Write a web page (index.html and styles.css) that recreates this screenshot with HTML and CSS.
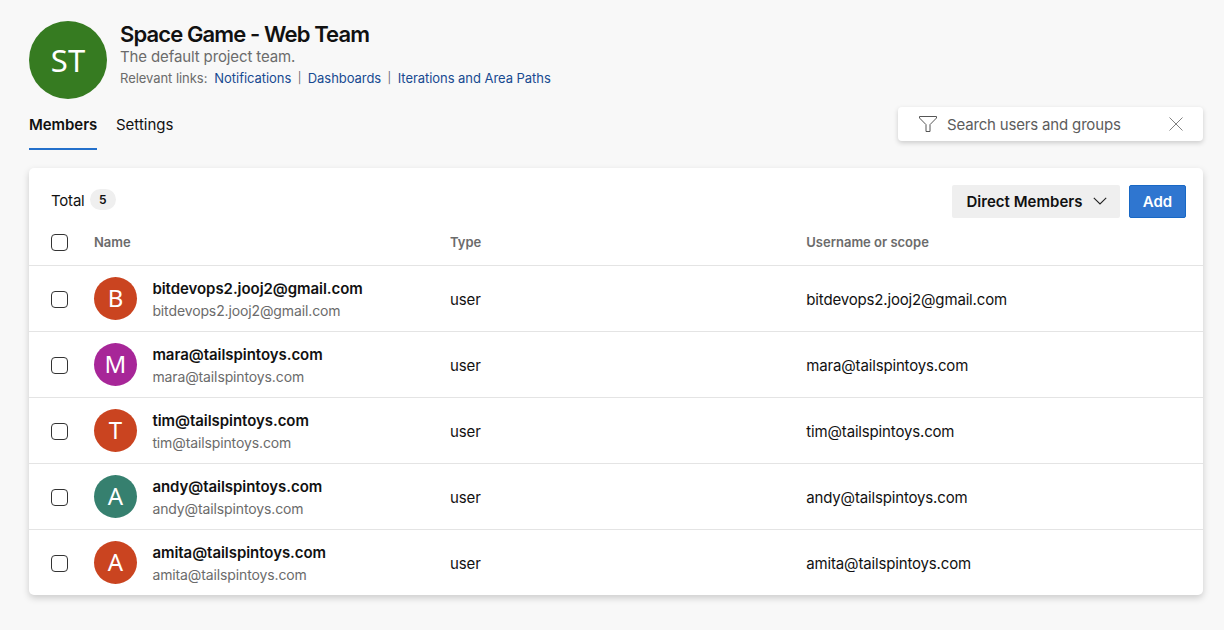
FILE: index.html
```html
<!DOCTYPE html>
<html lang="en">
<head>
<meta charset="utf-8">
<title>Space Game - Web Team</title>
<link rel="stylesheet" href="styles.css">
</head>
<body>
<header class="team-header">
  <div class="team-avatar">ST</div>
  <div class="team-info">
    <h1 class="team-name">Space Game - Web Team</h1>
    <div class="team-desc">The default project team.</div>
    <div class="team-links"><span class="links-label">Relevant links:</span><a>Notifications</a><span class="sep">|</span><a>Dashboards</a><span class="sep">|</span><a>Iterations and Area Paths</a></div>
  </div>
</header>
<div class="toolbar">
  <nav class="tabs">
    <div class="tab active"><span>Members</span></div>
    <div class="tab"><span>Settings</span></div>
  </nav>
  <div class="search">
    <svg class="filter-icon" width="18" height="16" viewBox="0 0 18 16" fill="none" stroke="#555" stroke-width="1"><path d="M.5.5h17v1.500l-6.500 6.600v6.900H7V8.600L.5 2z"/></svg>
    <span class="placeholder">Search users and groups</span>
    <svg class="clear-icon" width="14" height="14" viewBox="0 0 14 14" fill="none" stroke="#808080" stroke-width="1"><path d="M.5.5l13 13M13.500.5l-13 13"/></svg>
  </div>
</div>
<main class="card">
  <div class="card-head">
    <div class="total"><span class="total-label">Total</span><span class="count">5</span></div>
    <div class="actions">
      <button class="dropdown"><span>Direct Members</span><svg width="14" height="8" viewBox="0 0 14 8" fill="none" stroke="#222" stroke-width="1.1"><path d="M.8.8L7 7 13.200.8"/></svg></button>
      <button class="add"><span>Add</span></button>
    </div>
  </div>
  <div class="row columns"><i class="check"></i><span class="col-label">Name</span><span class="col-label">Type</span><span class="col-label">Username or scope</span></div>
  <div class="row"><i class="check"></i><div class="person"><div class="avatar orange">B</div><div><div class="primary">bitdevops2.jooj2@gmail.com</div><div class="secondary">bitdevops2.jooj2@gmail.com</div></div></div><span class="cell">user</span><span class="cell">bitdevops2.jooj2@gmail.com</span></div>
  <div class="row"><i class="check"></i><div class="person"><div class="avatar purple">M</div><div><div class="primary">mara@tailspintoys.com</div><div class="secondary">mara@tailspintoys.com</div></div></div><span class="cell">user</span><span class="cell">mara@tailspintoys.com</span></div>
  <div class="row"><i class="check"></i><div class="person"><div class="avatar orange">T</div><div><div class="primary">tim@tailspintoys.com</div><div class="secondary">tim@tailspintoys.com</div></div></div><span class="cell">user</span><span class="cell">tim@tailspintoys.com</span></div>
  <div class="row"><i class="check"></i><div class="person"><div class="avatar teal">A</div><div><div class="primary">andy@tailspintoys.com</div><div class="secondary">andy@tailspintoys.com</div></div></div><span class="cell">user</span><span class="cell">andy@tailspintoys.com</span></div>
  <div class="row"><i class="check"></i><div class="person"><div class="avatar orange">A</div><div><div class="primary">amita@tailspintoys.com</div><div class="secondary">amita@tailspintoys.com</div></div></div><span class="cell">user</span><span class="cell">amita@tailspintoys.com</span></div>
</main>
</body>
</html>
```
FILE: styles.css
```css
* { box-sizing: border-box; }
body {
  margin: 0;
  height: 630px;
  overflow: hidden;
  padding: 20px 21px 0 29px;
  background: #f8f8f8;
  color: #111;
  font: 15px/20px Inter, sans-serif;
}
.team-header { display: flex; gap: 13px; height: 79px; }
.team-avatar {
  width: 78px; height: 78px; border-radius: 50%; margin-top: .5px;
  background: #367b21; color: #fff;
  display: flex; align-items: center; justify-content: center;
  font: 31px/40px "Noto Sans", sans-serif;
}
.team-name { margin: 0; padding-top: 1px; font-size: 22px; line-height: 26px; font-weight: 600; letter-spacing: -.88px; white-space: nowrap; }
.team-desc { font-size: 15px; line-height: 19px; color: #6b6b6b; letter-spacing: -.12px; }
.team-links { display: flex; font-size: 13px; line-height: 20px; padding-top: 2px; color: #6b6b6b; letter-spacing: -.05px; }
.team-links a { color: #174a91; }
.links-label { margin-right: 7px; }
.sep { width: 16.500px; text-align: center; font-size: 11px; }
.toolbar { display: flex; justify-content: space-between; height: 68.500px; padding-top: 8px; }
.tabs { display: flex; gap: 19px; }
.tab { height: 43px; padding-top: 8px; }
.active { width: 68px; font-weight: 600; letter-spacing: -.06px; border-bottom: 2px solid #2470cb; white-space: nowrap; }
.search {
  width: 305px; height: 34px; border-radius: 4px; background: #fff;
  box-shadow: 0 2px 5px rgba(0,0,0,.18);
  display: flex; align-items: center; padding: 0 20px 0 21px;
}
.placeholder { flex: 1; margin-left: 10px; padding-top: 2px; color: #5c5c5c; letter-spacing: -.17px; }
.card {
  height: 427.500px; border-radius: 5px; background: #fff;
  box-shadow: 0 3px 7px rgba(0,0,0,.18); display: flex; flex-direction: column;
}
.card-head { display: flex; justify-content: space-between; height: 51px; padding: 17px 17px 0 22px; }
.total { display: flex; gap: 5px; height: 31px; align-items: center; }
.total-label { letter-spacing: -.2px; padding-top: 1px; }
.count { width: 26.500px; height: 21px; margin-bottom: 1px; border-radius: 11px; background: #efefef; font-size: 12px; line-height: 22px; text-align: center; font-weight: 600; }
.actions { display: flex; gap: 9px; }
button { border: 0; padding: 0; height: 33px; border-radius: 2px; font: 600 15px/20px Inter, sans-serif; color: #111; display: flex; align-items: center; justify-content: center; }
.dropdown { width: 168px; background: #efefef; gap: 10px; letter-spacing: .03px; padding-left: 1px; }
.dropdown span, .add span { padding-top: 2px; }
.add { width: 57px; background: #2f76d0; color: #fff; border: 1px solid #1868c5; }
.row {
  height: 66px; flex: none; border-top: 1px solid #e4e4e4;
  display: grid; grid-template-columns: 43px 356.100px 356.200px 1fr; align-items: center; padding-left: 22px;
}
.columns { height: 46.500px; border: 0; }
.check { width: 17px; height: 17px; border: 1px solid #333; border-radius: 4px; margin-top: 1px; }
.col-label { font-size: 13px; font-weight: 600; color: #6b6b6b; }
.person { display: flex; gap: 15.400px; padding-top: 1.500px; }
.avatar { width: 43px; height: 43px; border-radius: 50%; color: #fff; font: 24px/42px "Noto Sans", sans-serif; text-align: center; }
.orange { background: #ca4420; }
.purple { background: #a72698; }
.teal { background: #36806f; }
.primary { padding-top: 1px; font-weight: 600; line-height: 22px; letter-spacing: -.05px; }
.secondary { font-size: 14px; line-height: 22px; color: #6b6b6b; letter-spacing: -.12px; }
.cell { padding-top: 2px; letter-spacing: -.16px; }
```
